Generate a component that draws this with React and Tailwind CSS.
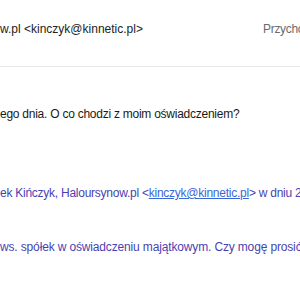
import React from "react";

const font = { fontFamily: '"Liberation Sans", Arial, sans-serif' };

export default function App() {
  return (
    <div className="w-[300px] h-[300px] overflow-hidden bg-white text-[12px]" style={font}>
      {/* header */}
      <div className="flex items-center justify-between h-[67px] pb-[8px] border-b border-[#e8e8e8] whitespace-nowrap">
        <span className="text-[#222]">w.pl &lt;kinczyk@kinnetic.pl&gt;</span>
        <span className="text-[#6b6b6b] mr-[-43px] w-[80px] tracking-[-0.3px]">Przychodzące</span>
      </div>

      {/* body */}
      <div className="whitespace-nowrap tracking-[-0.25px]">
        <p className="mt-[38px] text-[#1a1a1a]">ego dnia. O co chodzi z moim oświadczeniem?</p>
        <p className="mt-[61px] text-[#4a3fb0]">
          ek Kińczyk, Haloursynow.pl &lt;
          <span className="text-[#3a66d8] underline">kinczyk@kinnetic.pl</span>
          &gt; w dniu 2
        </p>
        <p className="mt-[36px] text-[#4a3fb0] tracking-[-0.15px]">ws. spółek w oświadczeniu majątkowym. Czy mogę prosić</p>
      </div>
    </div>
  );
}
